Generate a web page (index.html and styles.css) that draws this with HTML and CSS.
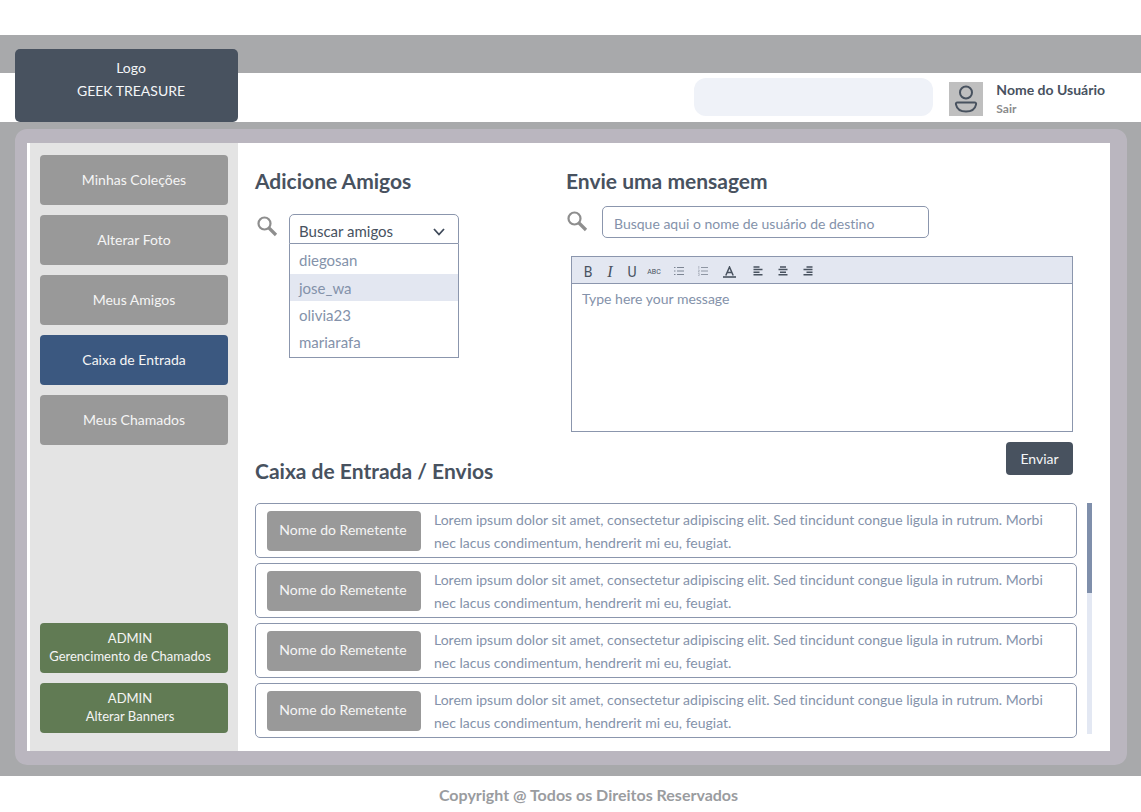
FILE: index.html
```html
<!DOCTYPE html>
<html lang="pt-BR">
<head>
<meta charset="utf-8">
<meta name="viewport" content="width=device-width, initial-scale=1">
<title>Geek Treasure - Caixa de Entrada</title>
<link rel="stylesheet" href="styles.css">
</head>
<body>
<header class="header">
  <a class="logo" href="#"><span>Logo</span><span>GEEK TREASURE</span></a>
  <div class="account">
    <input class="site-search" type="search" aria-label="Buscar no site">
    <span class="avatar">
      <svg width="34" height="34" viewBox="0 0 34 34" fill="none" stroke="#48525f" stroke-width="2" aria-hidden="true">
        <circle cx="17" cy="10.500" r="6"/>
        <path d="M8.500 20.500H25.500Q27.500 20.500 27 22.600C26 27.500 22.500 29.500 17 29.500S8 27.500 7 22.600Q6.500 20.500 8.500 20.500Z"/>
      </svg>
    </span>
    <div class="user">
      <strong class="user-name">Nome do Usuário</strong>
      <a class="logout" href="#">Sair</a>
    </div>
  </div>
</header>

<div class="stage">
  <div class="panel">
    <nav class="sidebar" aria-label="Menu">
      <div class="menu">
        <button class="menu-item" type="button">Minhas Coleções</button>
        <button class="menu-item" type="button">Alterar Foto</button>
        <button class="menu-item" type="button">Meus Amigos</button>
        <button class="menu-item active" type="button">Caixa de Entrada</button>
        <button class="menu-item" type="button">Meus Chamados</button>
      </div>
      <div class="menu">
        <button class="menu-item admin" type="button">ADMIN<br>Gerencimento de Chamados</button>
        <button class="menu-item admin" type="button">ADMIN<br>Alterar Banners</button>
      </div>
    </nav>

    <main class="content">
      <div class="top">
        <section class="friends">
          <h2 class="title">Adicione Amigos</h2>
          <div class="friend-search">
            <svg class="lens" width="22" height="22" viewBox="0 0 22 22" fill="none" stroke="#8e8e8e" aria-hidden="true"><circle cx="7.500" cy="7.500" r="6" stroke-width="2.200"/><path d="M12 12L19 19" stroke-width="3.200"/></svg>
            <div class="dropdown">
              <div class="select-wrap">
                <select class="select" aria-label="Buscar amigos"><option>Buscar amigos</option></select>
                <svg class="chevron" width="12" height="8" viewBox="0 0 12 8" fill="none" stroke="#3f4a5a" stroke-width="1.8" aria-hidden="true"><path d="M1 1L6 6.500L11 1"/></svg>
              </div>
              <ul class="options" role="listbox" aria-label="Amigos">
                <li class="option" role="option">diegosan</li>
                <li class="option selected" role="option" aria-selected="true">jose_wa</li>
                <li class="option" role="option">olivia23</li>
                <li class="option" role="option">mariarafa</li>
              </ul>
            </div>
          </div>
          <h2 class="title inbox-title">Caixa de Entrada / Envios</h2>
        </section>

        <section class="compose">
          <h2 class="title">Envie uma mensagem</h2>
          <div class="recipient">
            <svg class="lens" width="22" height="22" viewBox="0 0 22 22" fill="none" stroke="#8e8e8e" aria-hidden="true"><circle cx="7.500" cy="7.500" r="6" stroke-width="2.200"/><path d="M12 12L19 19" stroke-width="3.200"/></svg>
            <input class="recipient-input" type="text" aria-label="Usuário de destino" placeholder="Busque aqui o nome de usuário de destino">
          </div>
          <div class="editor">
            <div class="toolbar" role="toolbar" aria-label="Formatação">
              <div class="tools">
                <button class="tool" type="button" aria-label="Negrito">B</button>
                <button class="tool italic" type="button" aria-label="Itálico">I</button>
                <button class="tool" type="button" aria-label="Sublinhado">U</button>
                <button class="tool strike" type="button" aria-label="Tachado">ABC</button>
              </div>
              <div class="tools">
                <button class="tool list" type="button" aria-label="Lista"><svg width="10" height="10" viewBox="0 0 10 10" stroke="#7d8694"><path d="M0 1.500H1.500M3 1.500H10M0 5H1.500M3 5H10M0 8.500H1.500M3 8.500H10"/></svg></button>
                <button class="tool list" type="button" aria-label="Lista numerada"><svg width="10" height="10" viewBox="0 0 10 10" stroke="#8e96a3" fill="none"><path d="M3 1.500H10M3 5H10M3 8.500H10"/><path d="M.8 0V2.800M.2 4H1.200V5L.2 6H1.500M.2 7.500H1.200V9.500H.2" stroke-width=".6"/></svg></button>
                <button class="tool color" type="button" aria-label="Cor do texto"><svg width="13" height="12" viewBox="0 0 13 12" stroke="#48525f" fill="none"><path d="M2.800 9.500L6.500 1L10.200 9.500M4 6.500H9" stroke-width="1.500"/><path d="M0 11H13" stroke-width="1.600"/></svg></button>
              </div>
              <div class="tools">
                <button class="tool align" type="button" aria-label="Alinhar à esquerda"><svg width="10" height="10" viewBox="0 0 10 10" stroke="#48525f" stroke-width="1.500"><path d="M.5 1H6.500M.5 3.600H9.500M.5 6.200H6.500M.5 8.800H9.500"/></svg></button>
                <button class="tool align" type="button" aria-label="Centralizar"><svg width="10" height="10" viewBox="0 0 10 10" stroke="#48525f" stroke-width="1.500"><path d="M2 1H8M.5 3.600H9.500M2 6.200H8M.5 8.800H9.500"/></svg></button>
                <button class="tool align" type="button" aria-label="Alinhar à direita"><svg width="10" height="10" viewBox="0 0 10 10" stroke="#48525f" stroke-width="1.500"><path d="M3.500 1H9.500M.5 3.600H9.500M3.500 6.200H9.500M.5 8.800H9.500"/></svg></button>
              </div>
            </div>
            <textarea class="message-input" aria-label="Mensagem" placeholder="Type here your message"></textarea>
          </div>
          <button class="send" type="button">Enviar</button>
        </section>
      </div>

      <div class="inbox">
        <ul class="messages">
          <li class="message"><button class="sender" type="button">Nome do Remetente</button><p class="text">Lorem ipsum dolor sit amet, consectetur adipiscing elit. Sed tincidunt congue ligula in rutrum. Morbi nec lacus condimentum, hendrerit mi eu, feugiat.</p></li>
          <li class="message"><button class="sender" type="button">Nome do Remetente</button><p class="text">Lorem ipsum dolor sit amet, consectetur adipiscing elit. Sed tincidunt congue ligula in rutrum. Morbi nec lacus condimentum, hendrerit mi eu, feugiat.</p></li>
          <li class="message"><button class="sender" type="button">Nome do Remetente</button><p class="text">Lorem ipsum dolor sit amet, consectetur adipiscing elit. Sed tincidunt congue ligula in rutrum. Morbi nec lacus condimentum, hendrerit mi eu, feugiat.</p></li>
          <li class="message"><button class="sender" type="button">Nome do Remetente</button><p class="text">Lorem ipsum dolor sit amet, consectetur adipiscing elit. Sed tincidunt congue ligula in rutrum. Morbi nec lacus condimentum, hendrerit mi eu, feugiat.</p></li>
        </ul>
        <div class="scroll-track"><div class="scroll-thumb"></div></div>
      </div>
    </main>
  </div>
</div>
<footer class="footer">Copyright @ Todos os Direitos Reservados</footer>
</body>
</html>
```
FILE: styles.css
```css
* { box-sizing: border-box; }
body {
  margin: 0;
  padding-top: 35px;
  background: #fff;
  color: #48525f;
  font: 14px/22px Lato, "Open Sans", sans-serif;
  font-variant-ligatures: none;
}
h2, p, ul { margin: 0; padding: 0; }
ul { list-style: none; }
a { color: inherit; text-decoration: none; }
button, input, select, textarea { font: inherit; color: inherit; margin: 0; border: 0; }
svg { display: block; flex: none; }

.header {
  display: flex;
  justify-content: space-between;
  padding: 14px 36px 0 15px;
  background: linear-gradient(#a8a9ab 38px, #fff 38px);
}
.logo {
  display: flex;
  flex-direction: column;
  width: 223px;
  height: 73px;
  padding: 7px 0 0 9px;
  border-radius: 5px;
  background: #48525f;
  color: #f4f6f8;
  text-align: center;
  line-height: 23px;
}
.account { display: flex; align-items: flex-start; padding-top: 29px; }
.site-search {
  width: 239px;
  height: 38px;
  padding: 0 12px;
  border-radius: 12px;
  background: #eff2f8;
}
.avatar { margin: 4px 13px 0 16px; background: #bfbfbf; }
.user { display: flex; flex-direction: column; padding-top: 2px; line-height: 20px; }
.logout { color: #8b8b8b; font-size: 12px; font-weight: 700; line-height: 17px; }

.stage { padding: 7px 14px 11px 15px; background: #a8a9ab; }
.panel {
  display: flex;
  border: solid #bab6bf;
  border-width: 14px 17px 14px 12px;
  border-radius: 12px;
  background: #fff;
}
.sidebar {
  display: flex;
  flex: none;
  flex-direction: column;
  justify-content: space-between;
  width: 208px;
  margin-left: 3px;
  padding: 12px 10px 18px;
  background: #e4e4e4;
}
.menu { display: flex; flex-direction: column; gap: 10px; }
.menu-item {
  height: 50px;
  padding: 0;
  border-radius: 4px;
  background: #999;
  color: #f5f5f5;
}
.menu-item.active { background: #3b5880; }
.menu-item.admin { padding: 0 8px 2px 0; background: #617b54; font-size: 13px; line-height: 18px; }

.content { flex: 1; min-width: 0; padding: 24px 18px 13px 17px; }
.top { display: grid; grid-template-columns: 311px 1fr; }
.title { font-size: 21px; line-height: 28px; font-weight: 700; }
.friends { display: flex; flex-direction: column; }
.friend-search { display: flex; align-items: flex-start; gap: 10px; padding-top: 19px; }
.friend-search .lens { margin: 2px 0 0 2px; }
.dropdown { width: 170px; font-size: 15px; }
.select-wrap { position: relative; }
.select {
  display: block;
  width: 100%;
  height: 30px;
  padding: 3px 9px 0;
  border: 1px solid #8b96ad;
  border-radius: 5px 5px 0 0;
  background: #fff;
  appearance: none;
}
.chevron { position: absolute; top: 14px; right: 14px; pointer-events: none; }
.options { border: solid #8b96ad; border-width: 0 1px 1px; padding: 2px 0; }
.option { height: 28px; padding: 0 9px; color: #8492aa; line-height: 28px; }
.option + .option { height: 27px; }
.option.selected { background: #e3e7f1; }
.inbox-title { margin-top: auto; margin-bottom: -10px; }

.compose { display: flex; flex-direction: column; padding-right: 19px; }
.recipient { display: flex; align-items: center; gap: 13px; padding: 11px 0 0 1px; }
.recipient-input {
  width: 327px;
  height: 32px;
  padding: 2px 10px 0 11px;
  border: 1px solid #8b96ad;
  border-radius: 5px;
  background: #fff;
}
::placeholder { color: #8492aa; opacity: 1; }
.editor { margin: 18px 0 10px 5px; border: 1px solid #8b96ad; }
.toolbar {
  display: flex;
  gap: 2px;
  height: 27px;
  padding: 4px 5px 0;
  border-bottom: 1px solid #8b96ad;
  background: #e3e7f1;
}
.tools { display: flex; }
.tool {
  display: flex;
  align-items: center;
  justify-content: center;
  width: 22px;
  height: 22px;
  padding: 0;
  background: none;
  font: 14px/22px Roboto, sans-serif;
}
.tool.italic { font: italic 16px/22px "Liberation Serif", serif; }
.tool.strike { font-size: 7px; }
.tool.list { width: 24px; }
.tool.color { width: 28px; }
.tool.align { width: 25px; }
.tool.list svg, .tool.align svg { margin-bottom: 2px; }
.message-input {
  display: block;
  width: 100%;
  height: 147px;
  padding: 4px 10px;
  background: #fff;
  resize: none;
}
.send {
  align-self: flex-end;
  width: 67px;
  height: 33px;
  padding: 0;
  border-radius: 4px;
  background: #48525f;
  color: #f4f6f8;
}

.inbox { display: flex; gap: 10px; padding-top: 28px; }
.messages { display: flex; flex: 1; flex-direction: column; gap: 5px; }
.message {
  display: flex;
  align-items: center;
  gap: 13px;
  height: 55px;
  padding: 0 11px;
  border: 1px solid #8b96ad;
  border-radius: 5px;
}
.sender {
  flex: none;
  width: 154px;
  height: 40px;
  padding: 0 2px 2px 0;
  border-radius: 4px;
  background: #999;
  color: #f5f5f5;
}
.text { color: #8492aa; line-height: 23px; }
.scroll-track { width: 5px; margin-bottom: 4px; background: #e3e8f3; }
.scroll-thumb { height: 90px; background: #7f8fab; }

.footer {
  padding: 8px 0 5px 36px;
  color: #9a9c9f;
  font-size: 16px;
  font-weight: 700;
  text-align: center;
}
```
